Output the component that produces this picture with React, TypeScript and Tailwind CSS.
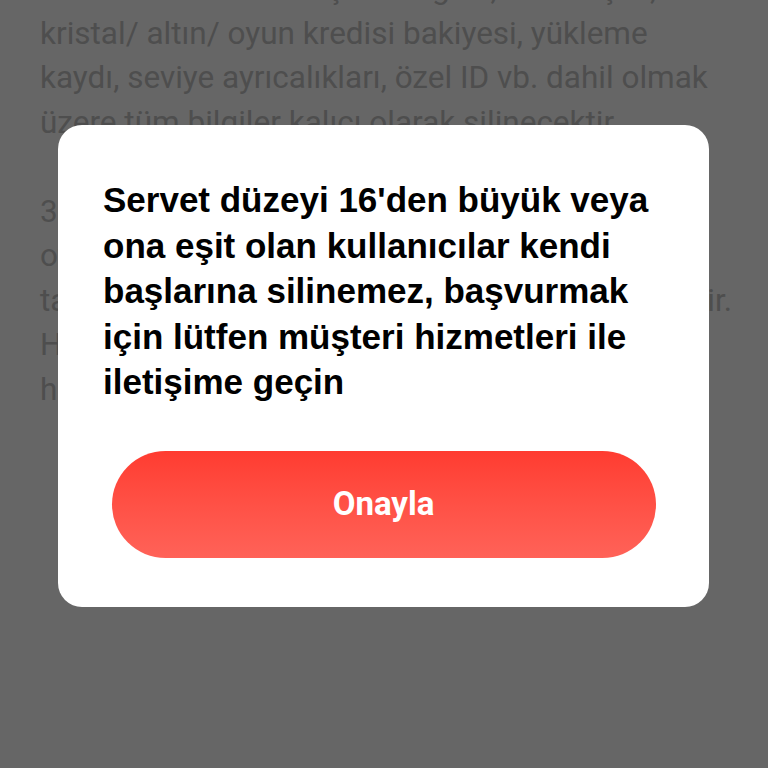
import React from 'react';

const bgLines = [
  'hesabınızdaki tüm kişisel bilgiler, arkadaşlar,',
  'kristal/ altın/ oyun kredisi bakiyesi, yükleme',
  'kaydı, seviye ayrıcalıkları, özel ID vb. dahil olmak',
  'üzere tüm bilgiler kalıcı olarak silinecektir.',
  '',
  '3 gün içinde hesabınıza tekrar giriş yaparsanız',
  'otomatik olarak iptal edilir, silme işlemi',
  'tamamlandıktan sonra geri alınamaz, dikkat edilir.',
  'Hesap silindikten sonra aynı telefon numarası',
  'hesabınızı yeniden kaydetmek için kullanılabilir.',
];

const titleLines = [
  "Servet düzeyi 16'den büyük veya",
  'ona eşit olan kullanıcılar kendi',
  'başlarına silinemez, başvurmak',
  'için lütfen müşteri hizmetleri ile',
  'iletişime geçin',
];

export default function App() {
  return (
    <div
      className="relative w-[768px] h-[768px] overflow-hidden bg-[#666666]"
      style={{ fontFamily: 'Roboto, "Noto Sans", sans-serif' }}
    >
      {/* page under the overlay */}
      <div className="-mt-[33px] pl-[40px] text-[31.5px] leading-[44.5px] text-[#4e4e4e] whitespace-nowrap">
        {bgLines.map((l, i) => (
          <div key={i} className="h-[44.5px]">{l}</div>
        ))}
      </div>

      {/* dialog */}
      <div className="absolute left-[58px] top-[125px] w-[651px] h-[482px] bg-white rounded-[24px] flex flex-col">
        <div
          className="pl-[45px] pt-[52px] text-[35px] leading-[45.5px] font-bold text-black whitespace-nowrap"
          style={{ fontFamily: '"Liberation Sans", Arial, sans-serif' }}
        >
          {titleLines.map((l, i) => (
            <div key={i}>{l}</div>
          ))}
        </div>
        <div className="flex justify-center mt-[46px]">
          <button className="w-[544px] h-[107px] rounded-full bg-gradient-to-b from-[#ff3b30] to-[#ff6258] text-white text-[33px] font-bold">
            Onayla
          </button>
        </div>
      </div>
    </div>
  );
}
